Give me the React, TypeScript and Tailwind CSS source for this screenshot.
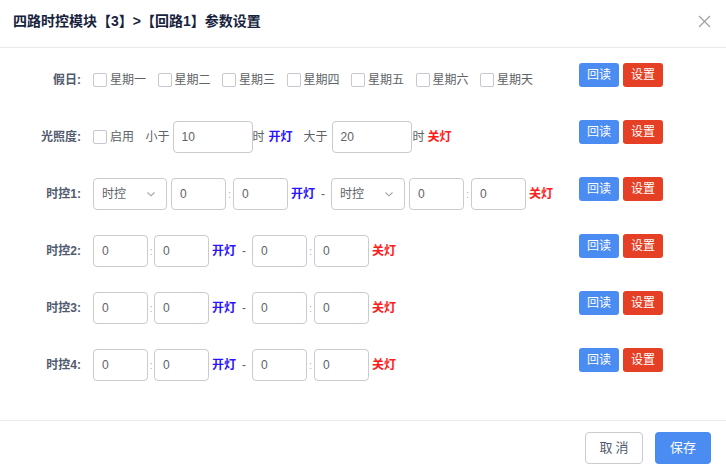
const font = { fontFamily: '"Liberation Sans", "Noto Sans CJK SC", sans-serif' };

const days = ["星期一", "星期二", "星期三", "星期四", "星期五", "星期六", "星期天"];

function Checkbox({ label }: { label: string }) {
  return (
    <label className="flex items-center mr-[11.5px]">
      <span className="w-[14px] h-[14px] border border-[#c5c8ce] rounded-[2px] bg-white mr-[3px]" />
      <span className="text-[12px] text-[#606266]">{label}</span>
    </label>
  );
}

function Input({ value, w = "w-[55px]" }: { value: string; w?: string }) {
  return (
    <div
      className={`${w} h-8 border border-[#c8cbd0] rounded-[4px] flex items-center px-[8px] text-[12px] text-[#606266] bg-white`}
    >
      {value}
    </div>
  );
}

function Select() {
  return (
    <div className="w-[74px] h-8 border border-[#c8cbd0] rounded-[4px] flex items-center justify-between pl-[8px] pr-[10px] text-[12px] text-[#606266]">
      <span>时控</span>
      <svg width="10" height="10" viewBox="0 0 10 10" fill="none" stroke="#9ea3ab" strokeWidth="1.1">
        <path d="M1.5 3.5 L5 6.8 L8.5 3.5" />
      </svg>
    </div>
  );
}

function Colon({ w = "w-[7px]" }: { w?: string }) {
  return <span className={`${w} text-center text-[11px] text-[#b0b4bb]`}>:</span>;
}

const On = ({ cls = "ml-[3px]" }: { cls?: string }) => (
  <span className={`${cls} text-[12px] font-bold text-[#2a14ff]`}>开灯</span>
);
const Off = ({ cls = "ml-[3px]" }: { cls?: string }) => (
  <span className={`${cls} text-[12px] font-bold text-[#ff1a1a]`}>关灯</span>
);

function Actions() {
  return (
    <div className="absolute left-[579px] -top-px flex gap-[4px]">
      <button className="w-10 h-6 rounded-[3px] bg-[#4b8cf2] text-white text-[12px]">回读</button>
      <button className="w-10 h-6 rounded-[3px] bg-[#e53f25] text-white text-[12px]">设置</button>
    </div>
  );
}

function Row({ label, children }: { label: string; children: React.ReactNode }) {
  return (
    <div className="relative h-8 flex items-center">
      <div className="w-[93px] pr-[12px] text-right text-[12px] font-bold text-[#515a6e]">{label}:</div>
      {children}
      <Actions />
    </div>
  );
}

function TimeRow({ label }: { label: string }) {
  return (
    <Row label={label}>
      <Input value="0" />
      <Colon w="w-[6px]" />
      <Input value="0" />
      <On />
      <span className="w-[16px] text-center text-[12px] text-[#606266]">-</span>
      <Input value="0" />
      <Colon />
      <Input value="0" />
      <Off />
    </Row>
  );
}

export default function App() {
  return (
    <div className="w-[726px] h-[474px] bg-white flex flex-col" style={font}>
      <div className="h-[48px] flex items-center justify-between pl-[13px] pr-[15px] border-b border-[#e8eaec]">
        <span className="text-[14px] font-bold text-[#17233d] -mt-[5px]">四路时控模块【3】&gt;【回路1】参数设置</span>
        <svg width="13" height="13" viewBox="0 0 13 13" stroke="#a0a0a0" strokeWidth="1.2" className="-mt-[4px]">
          <path d="M1 1 L12 12 M12 1 L1 12" />
        </svg>
      </div>
      <div className="flex-1 flex flex-col gap-[25px] pt-[16px]">
        <Row label="假日">
          {days.map((d) => (
            <Checkbox key={d} label={d} />
          ))}
        </Row>
        <Row label="光照度">
          <Checkbox label="启用" />
          <span className="mr-[3px] text-[12px] text-[#606266]">小于</span>
          <Input value="10" w="w-[80px]" />
          <span className="text-[12px] text-[#606266]">时</span>
          <On cls="ml-[4px]" />
          <span className="ml-[11px] mr-[4px] text-[12px] text-[#606266]">大于</span>
          <Input value="20" w="w-[80px]" />
          <span className="ml-[1px] text-[12px] text-[#606266]">时</span>
          <Off cls="ml-[3px]" />
        </Row>
        <Row label="时控1">
          <Select />
          <div className="w-[4px]" />
          <Input value="0" />
          <Colon />
          <Input value="0" />
          <On />
          <span className="w-[16px] text-center text-[12px] text-[#606266]">-</span>
          <Select />
          <div className="w-[4px]" />
          <Input value="0" />
          <Colon />
          <Input value="0" />
          <Off />
        </Row>
        <TimeRow label="时控2" />
        <TimeRow label="时控3" />
        <TimeRow label="时控4" />
      </div>
      <div className="h-[54px] border-t border-[#e8eaec] flex items-center justify-end gap-[12px] pr-[15px]">
        <button className="w-[58px] h-8 border border-[#c8cbd0] rounded-[4px] text-[13px] text-[#515a6e] tracking-[3px] pl-[3px]">取消</button>
        <button className="w-[56px] h-8 rounded-[4px] bg-[#4b8cf2] text-white text-[13px]">保存</button>
      </div>
    </div>
  );
}
